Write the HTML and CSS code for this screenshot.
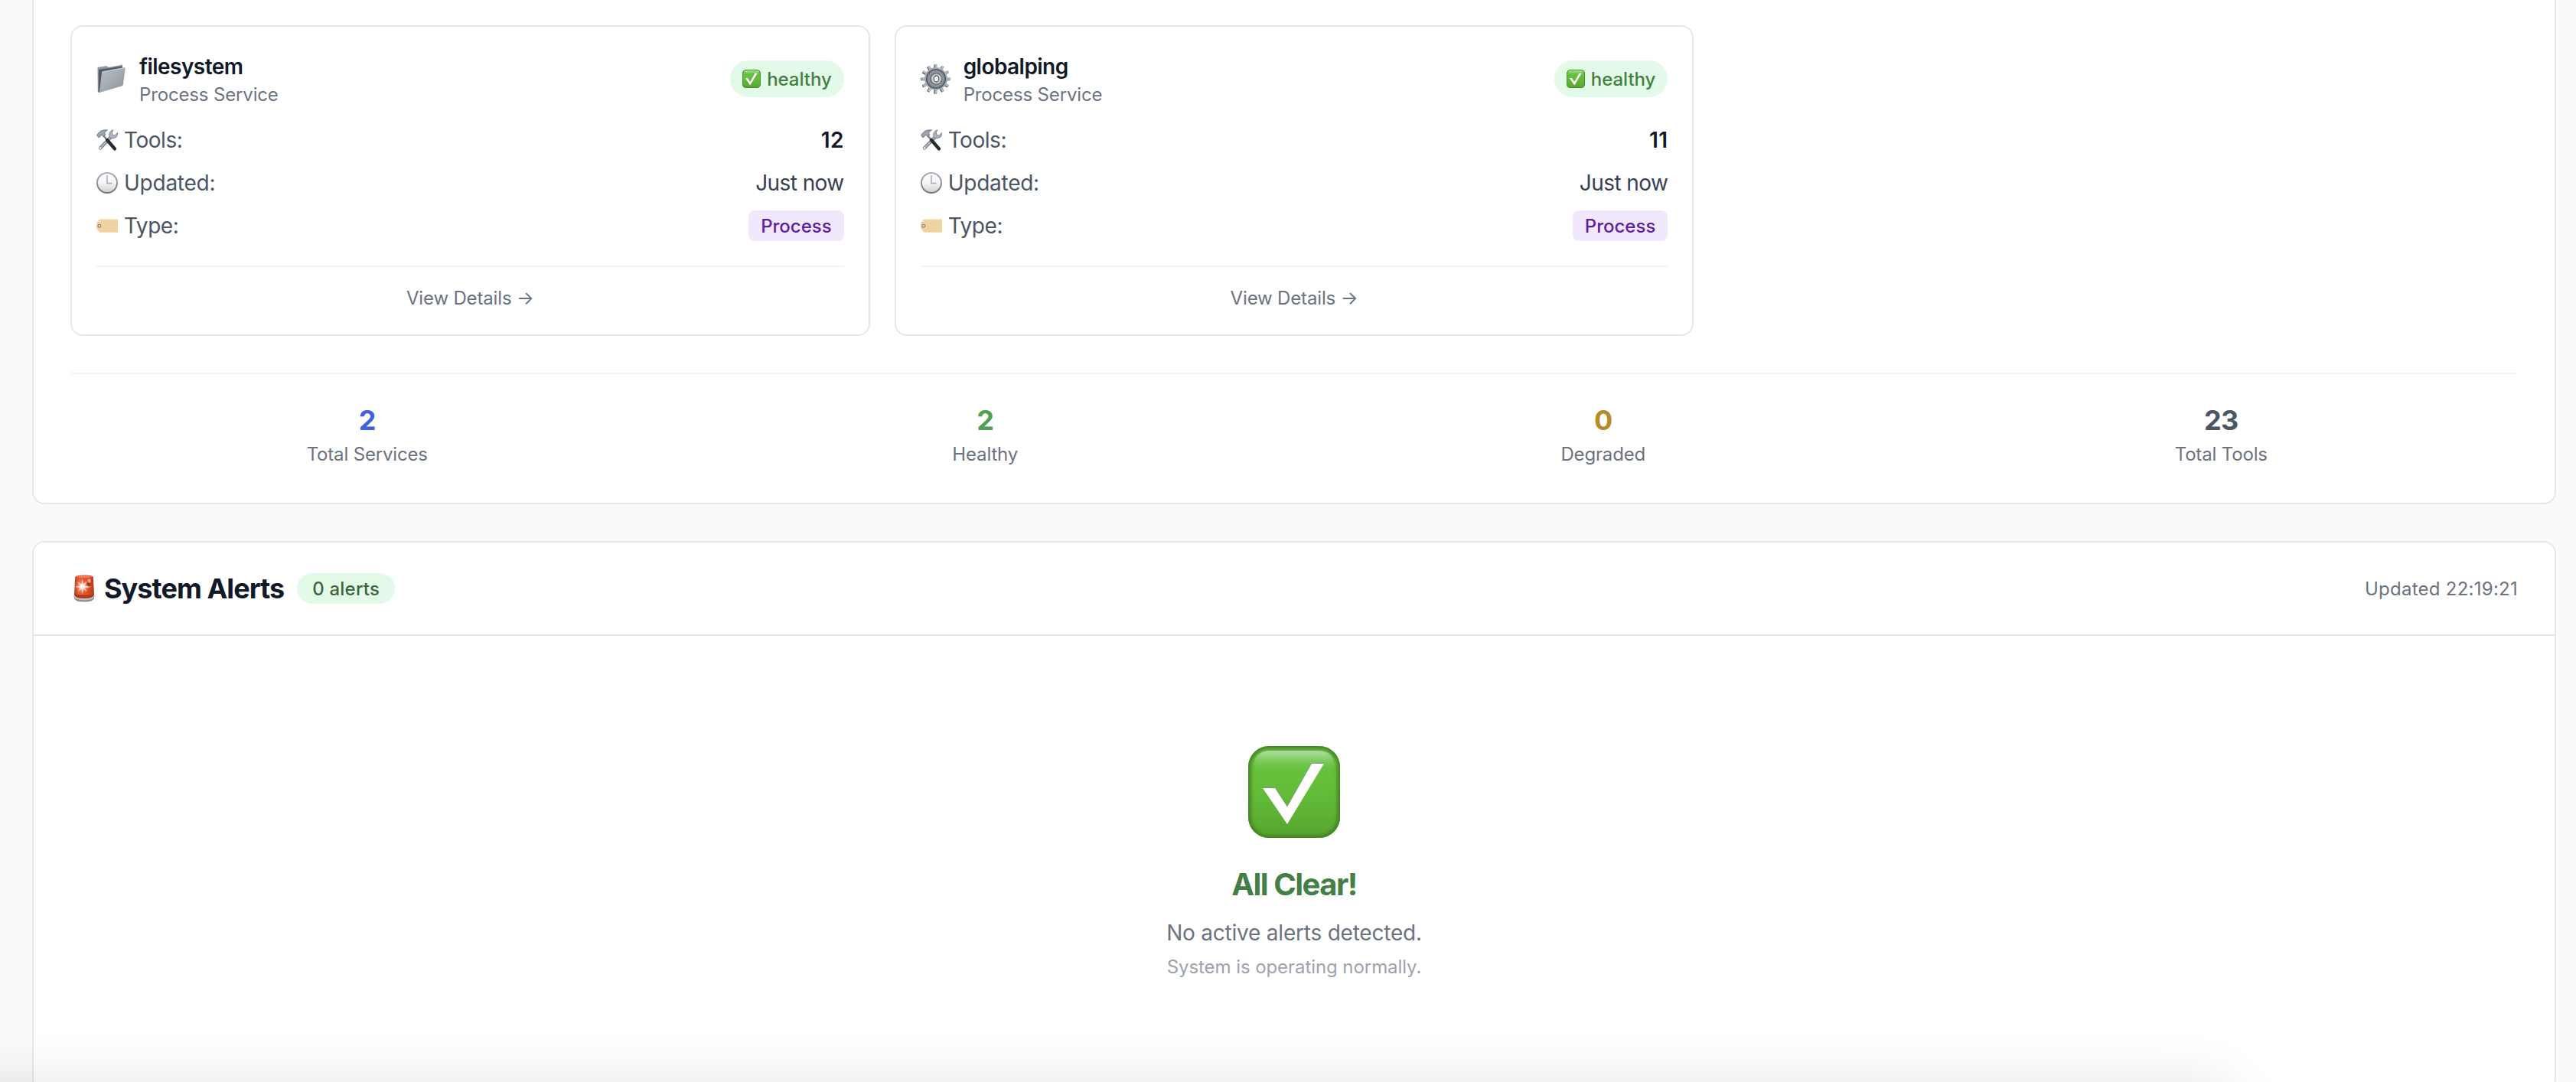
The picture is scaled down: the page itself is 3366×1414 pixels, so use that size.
FILE: index.html
```
<!DOCTYPE html>
<html lang="en">
<head>
<meta charset="utf-8">
<title>Service Dashboard</title>
<link rel="stylesheet" href="styles.css">
</head>
<body>
<svg class="defs" aria-hidden="true">
  <defs>
    <linearGradient id="green" x1="0" y1="0" x2="0" y2="1"><stop offset="0" stop-color="#69c43f"/><stop offset=".5" stop-color="#63bd39"/><stop offset="1" stop-color="#57a52f"/></linearGradient>
    <linearGradient id="gloss" x1="0" y1="0" x2="0" y2="1"><stop offset="0" stop-color="#b5e4ae"/><stop offset="1" stop-color="#69c43f" stop-opacity="0"/></linearGradient>
    <linearGradient id="folderFront" x1="0" y1="0" x2="1" y2="1"><stop offset="0" stop-color="#b9bec4"/><stop offset=".5" stop-color="#a5abb2"/><stop offset="1" stop-color="#878e97"/></linearGradient>
    <linearGradient id="folderBack" x1="0" y1="0" x2="0" y2="1"><stop offset="0" stop-color="#929ca7"/><stop offset="1" stop-color="#7e8892"/></linearGradient>
    <linearGradient id="clockRim" x1="0" y1="0" x2="0" y2="1"><stop offset="0" stop-color="#a9b3bf"/><stop offset="1" stop-color="#77777a"/></linearGradient>
    <linearGradient id="clockFace" x1="0" y1="0" x2="0" y2="1"><stop offset="0" stop-color="#fff"/><stop offset=".5" stop-color="#f4f4f4"/><stop offset="1" stop-color="#cfcfcf"/></linearGradient>
    <linearGradient id="siren" x1="0" y1="0" x2="1" y2="0"><stop offset="0" stop-color="#b9421f"/><stop offset=".25" stop-color="#ea5f36"/><stop offset=".7" stop-color="#dd4a26"/><stop offset="1" stop-color="#ad3a1c"/></linearGradient>
    <radialGradient id="glow"><stop offset="0" stop-color="#fff"/><stop offset=".35" stop-color="#ffd9cc" stop-opacity=".7"/><stop offset="1" stop-color="#ff8a66" stop-opacity="0"/></radialGradient>
    <filter id="soft" x="-10%" y="-10%" width="120%" height="120%"><feGaussianBlur stdDeviation="2.500"/></filter>
    <clipPath id="checkClip"><rect width="120" height="120" rx="27"/></clipPath>

    <symbol id="check" viewBox="0 0 120 120">
      <rect width="120" height="120" rx="27" fill="url(#green)"/>
      <path d="M7 34V28Q7 6 28 6H92Q113 6 113 28V34Z" fill="url(#gloss)"/>
      <g clip-path="url(#checkClip)"><rect width="120" height="120" rx="27" fill="none" stroke="#437f24" stroke-width="7" filter="url(#soft)"/></g>
      <path d="M19 54H35L51 78.500L83 22H99L51 102Z" fill="#8d8a96"/>
      <path d="M19 55H35L51 79.500L83 23H99L51 102Z" fill="#fff"/>
    </symbol>

    <symbol id="folder" viewBox="0 0 40 40">
      <path d="M1.500 5L13 3L16 5L34 1.500V26L3.500 38Q2 38 1.800 36Z" fill="url(#folderBack)"/>
      <path d="M3 8L34 3.500V28L3 37Z" fill="#4e5a66"/>
      <path d="M7 11.500Q7.200 10.300 9 10L36 5Q37.900 4.800 37.700 6.500L34.900 27.500Q34.700 29 33 29.500L5 37.700Q3.800 38 4 36.500Z" fill="url(#folderFront)"/>
      <path d="M7.200 11.200L37.500 5.500" stroke="#d4d8dc" stroke-width=".8"/>
    </symbol>

    <symbol id="gear" viewBox="0 0 40 40">
      <g stroke="#3f444b" stroke-width="3.500" transform="translate(-.9 .5)">
        <path d="M20 1V39M1 20H39M10.500 3.550L29.500 36.450M3.550 10.500L36.450 29.500M29.500 3.550L10.500 36.450M36.450 10.500L3.550 29.500"/>
      </g>
      <g stroke="#b0b8c2" stroke-width="3.300">
        <path d="M20 .8V39.200M.8 20H39.200M10.400 3.400L29.600 36.600M3.400 10.400L36.600 29.600M29.600 3.400L10.400 36.600M36.600 10.400L3.400 29.600"/>
      </g>
      <circle cx="20" cy="20" r="15" fill="#a6adb6"/>
      <circle cx="20" cy="20" r="12.300" fill="#84888e" stroke="#54595f" stroke-width="1.600"/>
      <circle cx="20" cy="20" r="9.300" fill="#777b81" stroke="#a7abb0"/>
      <circle cx="20.500" cy="20" r="6.300" fill="#d3d6d9"/>
      <ellipse cx="20.500" cy="20" rx="3.300" ry="4" fill="#fff" stroke="#54585e" stroke-width="1.300"/>
    </symbol>

    <symbol id="tools" viewBox="0 0 28 28">
      <path d="M19.500 9.500L5 24.500" stroke="#6f747b" stroke-width="4.200" stroke-linecap="round"/>
      <path d="M19.500 9.300L5.500 24" stroke="#b0b5bc" stroke-width="2.200" stroke-linecap="round"/>
      <path d="M22 .8Q17 2 16.600 7Q16.600 10 18.500 11.500Q22 13 26 10Q28 8 27.500 4.500L24 8L20.800 7L20.300 4Z" fill="#aab4c1" stroke="#747b85" stroke-width=".8"/>
      <circle cx="5" cy="24.500" r="1.200" fill="#fff"/>
      <path d="M8 7L15 15" stroke="#7e838a" stroke-width="2.600"/>
      <path d="M14 14L24 25.500" stroke="#292b2e" stroke-width="4.200" stroke-linecap="round"/>
      <path d="M.5 7.500L3.500 4Q7 .2 14.500 1Q11 2.500 10.500 5L12 7L9 9.500L7 7.500Q5 7.500 4.500 10L2.500 10.500Z" fill="#9ba4af" stroke="#626870" stroke-width=".8"/>
    </symbol>

    <symbol id="clock" viewBox="0 0 28 28">
      <circle cx="14" cy="14" r="13" fill="url(#clockFace)" stroke="url(#clockRim)" stroke-width="2"/>
      <path d="M13.900 4V14.500H20.500" fill="none" stroke="#aaa" stroke-width="1.500"/>
    </symbol>

    <symbol id="tag" viewBox="0 0 28 28">
      <path d="M5 5.400H27Q28 5.400 28 6.400V22Q28 23 27 23H5.500Q4.500 23 3.800 22L.8 18.500Q0 17.500 0 16V11.500Q0 10.500 .8 9.600L3.500 6.200Q4.200 5.400 5 5.400Z" fill="#efd3a0"/>
      <path d="M4.500 5.900H27.500M5 22.600H27.500" stroke="#f6e3bd" stroke-width=".9"/>
      <circle cx="3.900" cy="14.200" r="1.900" fill="#f7f1e6" stroke="#8b705a" stroke-width="1.100"/>
    </symbol>

    <symbol id="alarm" viewBox="0 0 28 36">
      <path d="M.8 27H27.200V30Q27 35.500 14 35.500T.8 30Z" fill="#8e8e8b"/>
      <path d="M.8 26.500H27.200V28.500Q26 33.200 14 33.200T.8 28.500Z" fill="#c4c3be"/>
      <path d="M2.200 3Q2.600 .5 14 .5T25.800 3L27 26Q26 31 14 31T1 26Z" fill="url(#siren)"/>
      <path d="M1.200 24Q3 27 14 27T26.800 24L27 26.500Q25 31 14 31T1 26.500Z" fill="#a83c20"/>
      <path d="M3 2.800Q6 1.200 14 1.200T25 2.800Q22 4.200 14 4.200T3 2.800Z" fill="#f07b55"/>
      <path d="M18 8Q23 11 21 16L17 14Z" fill="#8f2a17"/>
      <ellipse cx="20.500" cy="8" rx="2.300" ry="2.800" fill="#f09a82"/>
      <circle cx="11.500" cy="15.500" r="9.500" fill="url(#glow)"/>
      <path d="M11.500 5L12.400 13L18.500 8.500L13.800 14.500L24 16L13.800 17L18 22.500L12.400 18L11.500 26L10.500 18L5.500 22.500L9.200 17L1.500 16L9.200 14.500L5 9L10.500 13Z" fill="#fff" opacity=".8"/>
    </symbol>
  </defs>
</svg>

<main class="page">
  <section class="panel services">
    <div class="service-grid">
      <article class="card">
        <header class="card-head">
          <svg class="card-icon"><use href="#folder"/></svg>
          <div class="card-title"><h3 class="name">filesystem</h3><p class="kind">Process Service</p></div>
          <span class="badge healthy"><svg class="badge-icon"><use href="#check"/></svg><span class="badge-text">healthy</span></span>
        </header>
        <dl class="facts">
          <div class="fact"><dt><svg class="fact-icon"><use href="#tools"/></svg><span class="tee">Tools:</span></dt><dd class="strong">12</dd></div>
          <div class="fact"><dt><svg class="fact-icon"><use href="#clock"/></svg><span>Updated:</span></dt><dd class="when">Just now</dd></div>
          <div class="fact"><dt><svg class="fact-icon"><use href="#tag"/></svg><span class="tee">Type:</span></dt><dd class="type">Process</dd></div>
        </dl>
        <footer class="card-foot">View Details →</footer>
      </article>
      <article class="card">
        <header class="card-head">
          <svg class="card-icon"><use href="#gear"/></svg>
          <div class="card-title"><h3 class="name">globalping</h3><p class="kind">Process Service</p></div>
          <span class="badge healthy"><svg class="badge-icon"><use href="#check"/></svg><span class="badge-text">healthy</span></span>
        </header>
        <dl class="facts">
          <div class="fact"><dt><svg class="fact-icon"><use href="#tools"/></svg><span class="tee">Tools:</span></dt><dd class="strong">11</dd></div>
          <div class="fact"><dt><svg class="fact-icon"><use href="#clock"/></svg><span>Updated:</span></dt><dd class="when">Just now</dd></div>
          <div class="fact"><dt><svg class="fact-icon"><use href="#tag"/></svg><span class="tee">Type:</span></dt><dd class="type">Process</dd></div>
        </dl>
        <footer class="card-foot">View Details →</footer>
      </article>
    </div>
    <div class="stats">
      <div class="stat"><strong class="num blue">2</strong><span class="label">Total Services</span></div>
      <div class="stat"><strong class="num green">2</strong><span class="label">Healthy</span></div>
      <div class="stat"><strong class="num amber">0</strong><span class="label">Degraded</span></div>
      <div class="stat"><strong class="num gray">23</strong><span class="label">Total Tools</span></div>
    </div>
  </section>

  <section class="panel alerts">
    <header class="alerts-head">
      <svg class="alarm-icon"><use href="#alarm"/></svg>
      <h2 class="alerts-title">System Alerts</h2>
      <span class="badge count">0 alerts</span>
      <span class="updated">Updated 22:19:21</span>
    </header>
    <div class="clear">
      <svg class="clear-icon"><use href="#check"/></svg>
      <h3 class="clear-title">All Clear!</h3>
      <p class="clear-text">No active alerts detected.</p>
      <p class="clear-note">System is operating normally.</p>
    </div>
  </section>
</main>
<div class="dock-shadow"></div>
</body>
</html>
```
FILE: styles.css
```
* { box-sizing: border-box; margin: 0; padding: 0; }

html { height: 1414px; overflow: hidden; }

body {
  position: relative;
  height: 1414px;
  overflow: hidden;
  background: #f9fafc;
  color: #111827;
  font: 400 28px/40px Inter, "Liberation Sans", sans-serif;
}

svg { display: block; flex: none; }
.defs { position: absolute; width: 0; height: 0; }

.page {
  display: flex;
  flex-direction: column;
  gap: 48px;
  height: 1414px;
  padding: 0 26px 0 42px;
}

.panel {
  flex: none;
  background: #fff;
  border: 2px solid #e5e7eb;
  border-radius: 16px;
}

.services {
  height: 659px;
  padding: 33px 48px 48px;
  border-top: 0;
  border-radius: 0 0 16px 16px;
}

.service-grid {
  display: grid;
  grid-template-columns: repeat(3, 1fr);
  gap: 32px;
}

.card {
  height: 406px;
  padding: 32px;
  border: 2px solid #e5e7eb;
  border-radius: 16px;
}

.card-head { display: flex; align-items: center; height: 72px; }
.card-icon { width: 40px; height: 40px; }
.card-title { flex: 1; height: 72px; margin-left: 16px; }
.name { font-size: 28px; font-weight: 600; line-height: 40px; letter-spacing: -.55px; }
.kind { padding-top: 1px; font-size: 24px; line-height: 32px; letter-spacing: -.15px; color: #6b7280; }

.badge {
  display: flex;
  align-items: center;
  height: 40px;
  border-radius: 24px;
  font-size: 24px;
  line-height: 32px;
  font-weight: 500;
  background: #e3fae9;
}
.healthy { gap: 8px; height: 48px; padding: 0 16px; color: #437f44; letter-spacing: -.05px; }
.badge-text { padding-top: 1px; }
.badge-icon { width: 24px; height: 24px; }

.facts { display: flex; flex-direction: column; gap: 16px; margin-top: 24px; }
.fact { display: flex; align-items: center; justify-content: space-between; height: 40px; }
.fact dt { display: flex; align-items: center; gap: 8px; color: #4b5563; letter-spacing: -.25px; }
.fact .tee { letter-spacing: -.45px; }
.fact-icon { width: 28px; height: 28px; }
.strong { font-weight: 600; letter-spacing: .3px; }
.when { color: #374151; letter-spacing: -.58px; }
.type {
  height: 40px;
  padding: 5px 16px 3px;
  border-radius: 8px;
  background: #f1e8fe;
  color: #5f219f;
  font-size: 24px;
  font-weight: 500;
  line-height: 32px;
}

.card-foot {
  margin-top: 32px;
  padding-top: 25px;
  border-top: 2px solid #f3f4f6;
  color: #6b7280;
  font-size: 24px;
  line-height: 32px;
  letter-spacing: -.16px;
  text-align: center;
}

.stats {
  display: grid;
  grid-template-columns: repeat(4, 1fr);
  gap: 32px;
  margin-top: 48px;
  padding-top: 32px;
  border-top: 2px solid #f3f4f6;
  text-align: center;
}
.stat { display: flex; flex-direction: column; }
.num { font-size: 36px; font-weight: 700; line-height: 56px; letter-spacing: -.6px; }
.label { padding-top: 1px; font-size: 24px; line-height: 32px; letter-spacing: -.16px; color: #6b7280; }
.blue { color: #425fe0; }
.green { color: #52a053; }
.amber { color: #b88a2c; }
.gray { color: #4b5563; }

.alerts { height: 719px; }
.alerts-head {
  display: flex;
  align-items: center;
  height: 122px;
  padding: 0 48px;
  border-bottom: 2px solid #e5e7eb;
}
.alarm-icon { width: 28px; height: 36px; margin-left: 4px; }
.alerts-title { margin-left: 12px; font-size: 36px; font-weight: 700; line-height: 56px; letter-spacing: -.95px; }
.count { margin-left: 17px; padding: 1px 20px 0; color: #3a6638; letter-spacing: .2px; }
.updated { margin-left: auto; padding-top: 1px; color: #6b7280; font-size: 24px; letter-spacing: .26px; }

.clear {
  display: flex;
  flex-direction: column;
  align-items: center;
  padding-top: 144px;
}
.clear-icon { width: 120px; height: 120px; }
.clear-title { margin-top: 33px; color: #437f44; font-size: 40px; font-weight: 700; line-height: 56px; letter-spacing: -1.5px; }
.clear-text { margin-top: 15px; color: #6b7280; line-height: 40px; letter-spacing: -.22px; }
.clear-note { margin-top: 9px; color: #9ca3af; font-size: 24px; line-height: 32px; letter-spacing: -.07px; }

/* Shadow cast upward by the window below the page */
.dock-shadow {
  position: absolute;
  top: 1424px;
  left: -200px;
  width: 3110px;
  height: 400px;
  border-radius: 20px;
  box-shadow: 0 0 80px rgba(0, 0, 0, .14);
}
```
